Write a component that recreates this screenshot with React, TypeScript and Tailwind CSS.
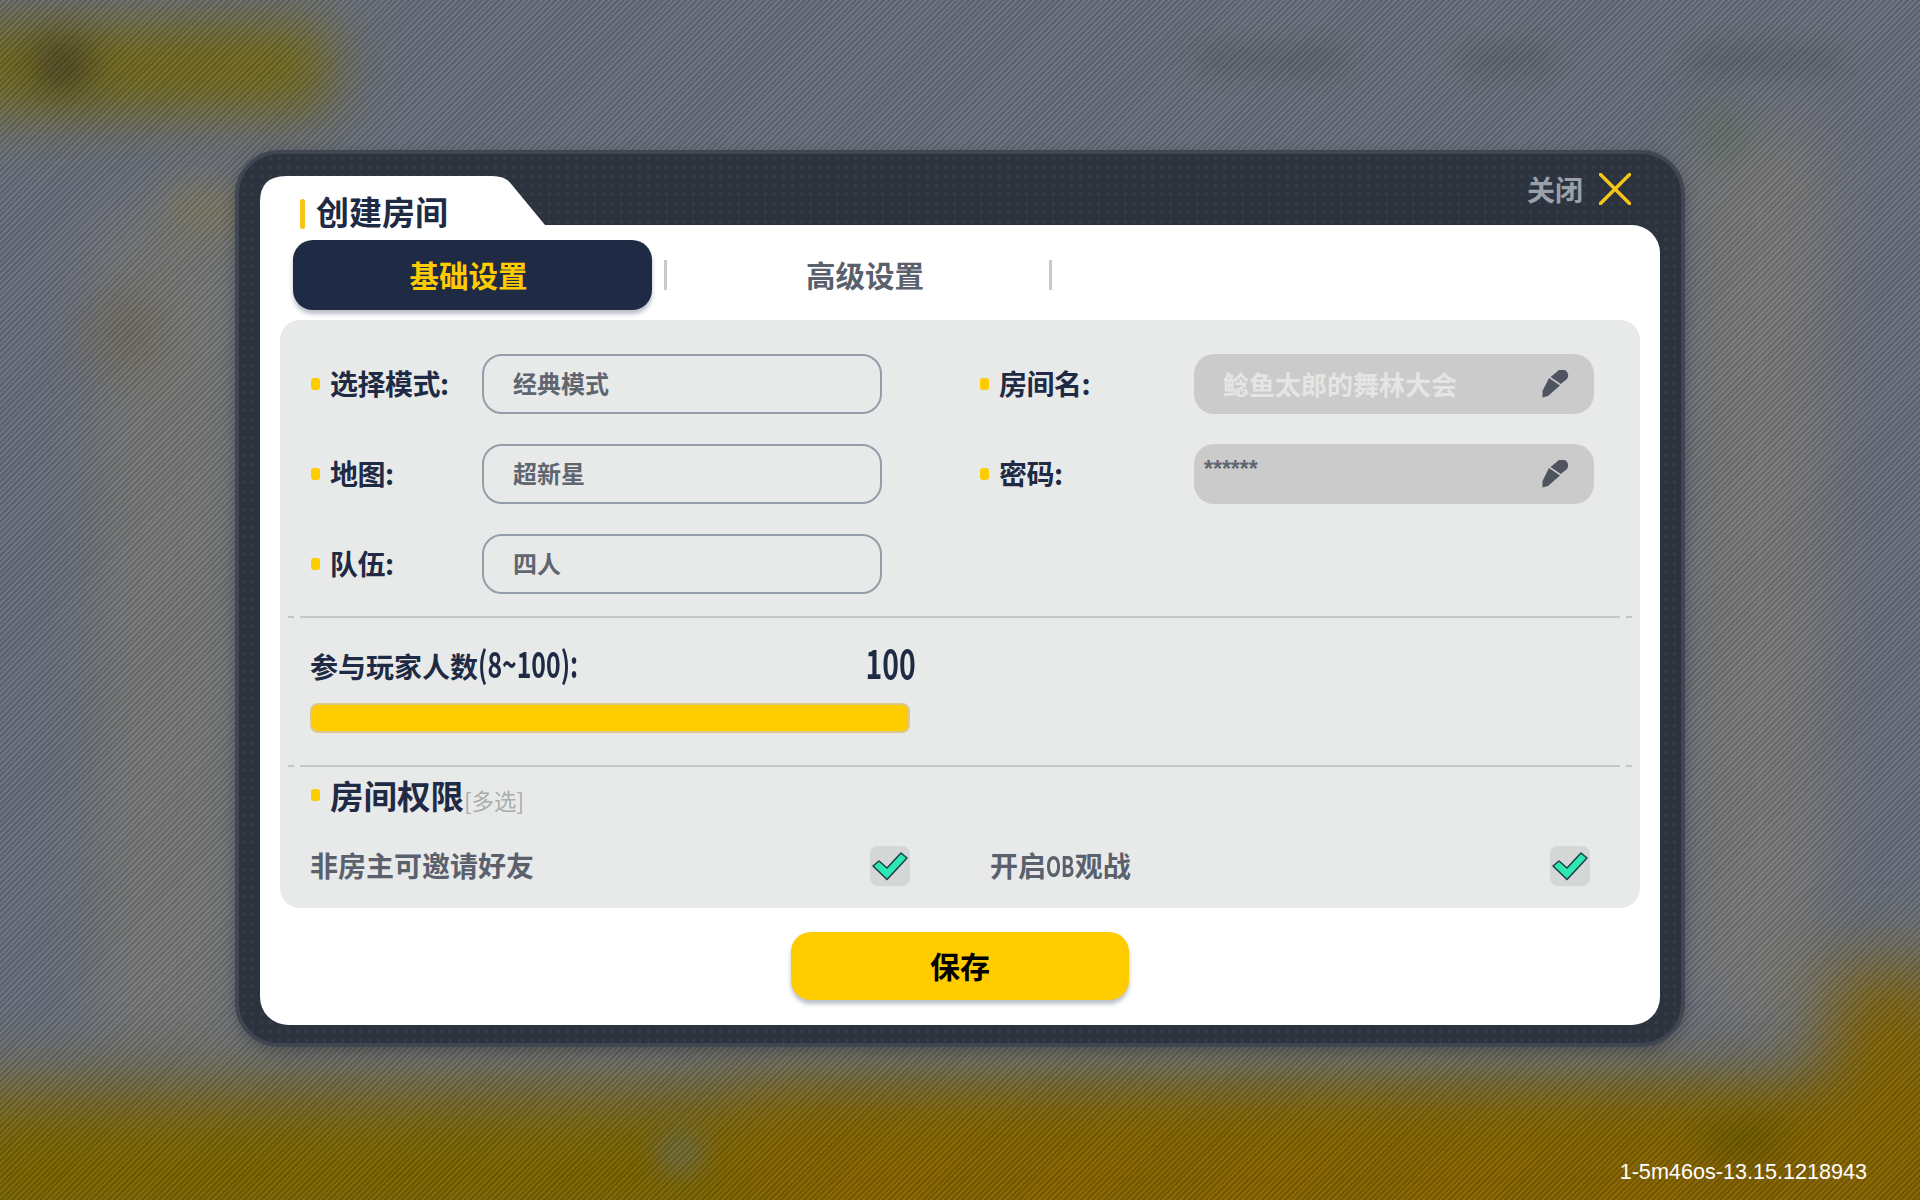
function Pencil() {
  return (
    <svg width="28" height="28" viewBox="0 0 28 28" className="shrink-0">
      <path d="M8 8L19 15.5L7 26L1.5 27.5L1.5 21Z" fill="#4f5460" />
      <path d="M9.5 7L16 1.8A5.4 5.4 0 0 1 26 9L19.8 14.1Z" fill="#4f5460" />
    </svg>
  );
}

function Check() {
  return (
    <span className="flex h-[40px] w-[40px] items-center justify-center rounded-[8px] bg-[#d5d7d7]">
      <svg width="40" height="40" viewBox="0 0 40 40">
        <path d="M3 20L17 33.5L37 12L31 7L17 22L9 15Z" fill="#2ee8b4" stroke="#1d4047" strokeWidth="1.6" strokeLinejoin="round" />
      </svg>
    </span>
  );
}

function Dot() {
  return <span className="h-[12px] w-[9px] shrink-0 rounded-[3px] bg-[#ffcc00]" />;
}

function Divider() {
  return (
    <div className="mx-[8px] flex h-[2px] items-center gap-[6px]">
      <span className="h-[2px] w-[6px] bg-[#c4c7c7]" />
      <span className="h-[2px] flex-1 bg-[#c4c7c7]" />
      <span className="h-[2px] w-[6px] bg-[#c4c7c7]" />
    </div>
  );
}

function Label({ text, className }: { text: string; className: string }) {
  return (
    <div className={`flex shrink-0 items-center gap-[10px] ${className}`}>
      <Dot />
      <span className="mb-[2px] text-[28px] font-bold leading-none tracking-[-0.5px] text-[#1f2a44]">{text}</span>
    </div>
  );
}

function SelectField({ label, value }: { label: string; value: string }) {
  return (
    <div className="flex h-[60px] items-center">
      <Label text={label} className="w-[171px]" />
      <div className="flex h-[60px] w-[400px] items-center rounded-[20px] border-2 border-[#939ea9] pb-[2px] pl-[29px] text-[24px] font-bold text-[#5f6670]">
        {value}
      </div>
    </div>
  );
}

function EditField({ label, children }: { label: string; children: React.ReactNode }) {
  return (
    <div className="flex h-[60px] items-center">
      <Label text={label} className="w-[214px]" />
      <div className="flex h-[60px] w-[400px] items-center justify-between rounded-[20px] bg-[#cbcbcb] pr-[25px]">
        {children}
        <Pencil />
      </div>
    </div>
  );
}

export default function App() {
  return (
    <div className="relative flex h-[1200px] w-full items-center justify-center overflow-hidden bg-[#6a707d] font-['Noto_Sans_CJK_SC','Liberation_Sans',sans-serif]">
      {/* blurred game page behind the dialog */}
      <div className="absolute inset-0">
        <div className="absolute left-[-40px] top-[25px] h-[85px] w-[370px] bg-[#756a14] blur-[30px]" />
        <div className="absolute left-[35px] top-[40px] h-[50px] w-[55px] bg-[#4a4526] blur-[18px]" />
        <div className="absolute left-[100px] top-[220px] h-[830px] w-[140px] bg-[#787977] blur-[28px]" />
        <div className="absolute left-[95px] top-[300px] h-[70px] w-[65px] bg-[#716c60] blur-[22px]" />
        <div className="absolute left-[165px] top-[185px] h-[50px] w-[80px] bg-[#7f7b64] blur-[20px]" />
        <div className="absolute left-[1700px] top-[130px] h-[900px] w-[120px] bg-[#7a7a78] blur-[30px]" />
        <div className="absolute left-[1700px] top-[110px] h-[50px] w-[45px] bg-[#5f6e64] blur-[20px]" />
        <div className="absolute left-[1195px] top-[50px] h-[20px] w-[150px] bg-[#5a5e6a] blur-[14px]" />
        <div className="absolute left-[1460px] top-[50px] h-[20px] w-[90px] bg-[#5a5e6a] blur-[14px]" />
        <div className="absolute left-[1690px] top-[50px] h-[20px] w-[150px] bg-[#5a5e6a] blur-[14px]" />
        <div className="absolute bottom-[-60px] left-[-60px] h-[170px] w-[2040px] bg-[#7c6500] blur-[36px]" />
        <div className="absolute bottom-[-50px] left-[740px] h-[140px] w-[1240px] bg-[#866400] blur-[36px]" />
        <div className="absolute bottom-[-30px] right-[-40px] h-[260px] w-[130px] bg-[#846400] blur-[38px]" />
        <div className="absolute left-[655px] top-[1130px] h-[45px] w-[50px] rounded-full bg-[#6f6a3a] blur-[12px]" />
        <div className="absolute left-[1700px] top-[1125px] h-[30px] w-[80px] bg-[#655600] blur-[18px]" />
      </div>
      <div className="absolute inset-0 bg-[repeating-linear-gradient(135deg,rgba(0,0,0,0.13)_0,rgba(0,0,0,0.13)_2px,rgba(255,255,255,0.03)_2px,rgba(255,255,255,0.03)_4px)]" />

      <div className="relative mb-[3px] flex h-[897px] w-[1450px] flex-col rounded-[44px] border-4 border-[#414752] bg-[#2c333e] bg-[radial-gradient(#353c48_1.2px,transparent_2.4px)] bg-[length:9px_9px] px-[21px] pb-[18px] pt-[22px] shadow-[0_4px_14px_rgba(0,0,0,0.25)]">
        <div className="flex h-[49px] shrink-0 items-start justify-between">
          <div className="relative z-10 h-[49px] w-[285px]">
            <svg width="285" height="49" viewBox="0 0 285 49" className="absolute inset-0">
              <path d="M0 49V26Q0 0 26 0H232Q246 0 252 9L285 49Z" fill="#ffffff" />
            </svg>
            <div className="relative flex items-center gap-[11px] pl-[40px] pt-[20px]">
              <span className="h-[30px] w-[5px] rounded-[2px] bg-[#f5c518]" />
              <span className="mb-[6px] text-[33px] font-bold leading-[30px] text-[#1f2a44]">创建房间</span>
            </div>
          </div>
          <div className="-mt-[3px] flex items-center gap-[16px] pr-[29px]">
            <span className="text-[28px] font-bold leading-[32px] text-[#9aa1a9]">关闭</span>
            <svg width="32" height="32" viewBox="0 0 32 32">
              <path d="M1.5 1.5L30.5 30.5M30.5 1.5L1.5 30.5" stroke="#f5c518" strokeWidth="3.5" strokeLinecap="round" />
            </svg>
          </div>
        </div>

        <div className="flex flex-1 flex-col rounded-[28px] rounded-tl-none bg-white px-[20px] pt-[15px]">
          <div className="flex h-[70px] items-center pl-[13px]">
            <div className="flex h-[70px] w-[359px] items-center justify-center rounded-[20px] bg-[#1f2a44] pb-[2px] pr-[8px] text-[29.5px] font-bold text-[#ffcc00] shadow-[0_4px_4px_rgba(31,42,68,0.3)]">
              基础设置
            </div>
            <span className="ml-[12px] h-[30px] w-[3px] bg-[#c9cbcb]" />
            <div className="flex h-[70px] w-[382px] items-center justify-center pb-[2px] pl-[14px] text-[29.5px] font-bold text-[#5a616d]">
              高级设置
            </div>
            <span className="h-[30px] w-[3px] bg-[#c9cbcb]" />
          </div>

          <div className="mt-[10px] flex h-[588px] flex-col rounded-[20px] bg-[#e8eaea] pt-[34px]">
            <div className="grid grid-cols-[571px_614px] gap-x-[98px] gap-y-[30px] pl-[31px]">
              <SelectField label="选择模式:" value="经典模式" />
              <EditField label="房间名:">
                <span className="pb-[2px] pl-[29px] text-[26px] font-bold text-[#e5e5e5]">鲶鱼太郎的舞林大会</span>
              </EditField>
              <SelectField label="地图:" value="超新星" />
              <EditField label="密码:">
                <span className="self-start pl-[10px] pt-[14px] font-['Liberation_Sans',sans-serif] text-[23px] font-bold leading-[22px] text-[#5f6670]">******</span>
              </EditField>
              <SelectField label="队伍:" value="四人" />
            </div>

            <div className="mt-[22px]">
              <Divider />
            </div>

            <div className="flex h-[85px] w-[636px] items-center justify-between pl-[30px] pt-[2px]">
              <span className="text-[28px] font-bold leading-none text-[#1f2a44]">
                参与玩家人数
                <span className="-mr-[45px] inline-block origin-left scale-x-[0.69] text-[36px]">(8~100):</span>
              </span>
              <span className="inline-block origin-right scale-x-[0.71] text-[40px] font-bold leading-none text-[#1f2a44]">100</span>
            </div>
            <div className="ml-[30px] h-[30px] w-[600px] rounded-[8px] border-2 border-[#dcc88f] bg-[#ffcc00]" />

            <div className="mt-[32px]">
              <Divider />
            </div>

            <div className="flex h-[56px] items-center gap-[10px] pl-[31px]">
              <Dot />
              <div className="flex items-end">
                <span className="text-[33.5px] font-bold leading-none text-[#1f2a44]">房间权限</span>
                <span className="text-[22.5px] font-normal leading-none text-[#a9adad]">[多选]</span>
              </div>
            </div>

            <div className="mt-[23px] flex">
              <div className="flex h-[40px] w-[630px] items-center justify-between pl-[30px]">
                <span className="pb-[2px] text-[28px] font-bold text-[#5a616d]">非房主可邀请好友</span>
                <Check />
              </div>
              <div className="ml-[50px] flex h-[40px] w-[630px] items-center justify-between pl-[30px]">
                <span className="pb-[2px] text-[28px] font-bold text-[#5a616d]">
                  开启
                  <span className="-mr-[12px] inline-block origin-left scale-x-[0.7]">OB</span>
                  观战
                </span>
                <Check />
              </div>
            </div>
          </div>

          <div className="mt-[24px] flex justify-center">
            <button className="h-[68px] w-[338px] rounded-[20px] bg-[#ffcc00] pb-[2px] text-[30px] font-bold text-black shadow-[0_4px_4px_rgba(31,42,68,0.3)]">
              保存
            </button>
          </div>
        </div>
      </div>

      <div className="absolute bottom-[16px] right-[53px] font-['Liberation_Sans',sans-serif] text-[21.6px] leading-[24px] text-white">
        1-5m46os-13.15.1218943
      </div>
    </div>
  );
}
